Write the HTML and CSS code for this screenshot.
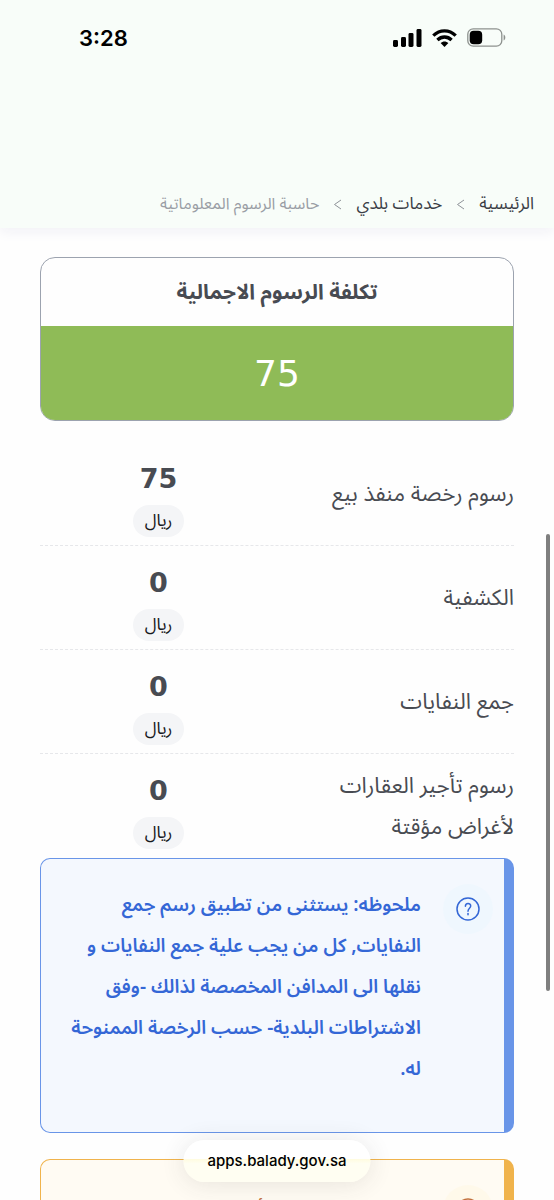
FILE: index.html
```html
<!DOCTYPE html>
<html lang="ar" dir="rtl">
  <head>
    <meta charset="utf-8" />
    <meta name="viewport" content="width=device-width, initial-scale=1" />
    <title>حاسبة الرسوم المعلوماتية</title>
    <link rel="stylesheet" href="styles.css">
  </head>

  <body>
    <header class="top">
      <div class="status-bar" dir="ltr">
        <span class="time">3:28</span>
        <div class="status-icons">
          <svg width="29" height="18" viewBox="0 0 29 18">
            <rect x="0" y="11" width="5" height="7" rx="1.4" />
            <rect x="8" y="8" width="5" height="10" rx="1.4" />
            <rect x="15.500" y="4" width="5" height="14" rx="1.4" />
            <rect x="23.500" y="0" width="5" height="18" rx="1.4" />
          </svg>
          <svg width="25" height="18" viewBox="0 0 25 18">
            <g fill="none" stroke="#000" stroke-width="3.300">
              <path d="M1.300 6.600C7.800 .2 17.200 .2 23.700 6.600" />
              <path d="M5.400 11C9.600 7 15.400 7 19.600 11" />
            </g>
            <path d="M8.600 14.100C10.900 12 14.100 12 16.400 14.100L12.500 18Z" />
          </svg>
          <svg width="39" height="19" viewBox="0 0 39 19">
            <rect x=".8" y=".8" width="34" height="17.400" rx="5.500" fill="none" stroke="#8d918e" stroke-width="1.300" />
            <rect x="2.700" y="2.800" width="12.500" height="13.400" rx="4" />
            <path d="M36.600 6.500C38.900 7.500 38.900 11.500 36.600 12.500Z" fill="#8d918e" />
          </svg>
        </div>
      </div>
      <nav class="breadcrumb">
        <a href="#">الرئيسية</a>
        <svg class="sep" width="9" height="11" viewBox="0 0 9 11"><path d="M8 1L1.500 5.500L8 10" /></svg>
        <a href="#">خدمات بلدي</a>
        <svg class="sep" width="9" height="11" viewBox="0 0 9 11"><path d="M8 1L1.500 5.500L8 10" /></svg>
        <span class="current">حاسبة الرسوم المعلوماتية</span>
      </nav>
    </header>

    <main>
      <section class="total">
        <h1>تكلفة الرسوم الاجمالية</h1>
        <div class="total-value">75</div>
      </section>

      <ul class="fees">
        <li>
          <span class="fee-name">رسوم رخصة منفذ بيع</span>
          <div class="fee-value"><b>75</b><span class="unit">ريال</span></div>
        </li>
        <li>
          <span class="fee-name">الكشفية</span>
          <div class="fee-value"><b>0</b><span class="unit">ريال</span></div>
        </li>
        <li>
          <span class="fee-name">جمع النفايات</span>
          <div class="fee-value"><b>0</b><span class="unit">ريال</span></div>
        </li>
        <li>
          <span class="fee-name">رسوم تأجير العقارات<br>لأغراض مؤقتة</span>
          <div class="fee-value"><b>0</b><span class="unit">ريال</span></div>
        </li>
      </ul>

      <section class="note note-info">
        <div class="note-icon">
          <svg width="24" height="24" viewBox="0 0 24 24">
            <circle cx="12" cy="12" r="11" />
            <path d="M9.400 9.300C9.400 5.600 14.700 5.700 14.700 9.100C14.700 11.300 12 11.400 12 14.200" />
            <path d="M12 16.600V17.800" />
          </svg>
        </div>
        <p>
          ملحوظه: يستثنى من تطبيق رسم جمع<br>
          النفايات, كل من يجب علية جمع النفايات و<br>
          نقلها الى المدافن المخصصة لذالك -وفق<br>
          الاشتراطات البلدية- حسب الرخصة الممنوحة<br>
          له.
        </p>
      </section>

      <section class="note note-warning">
        <div class="note-icon">
          <svg width="24" height="24" viewBox="0 0 24 24">
            <circle cx="12" cy="12" r="11" />
            <path d="M9.400 9.300C9.400 5.600 14.700 5.700 14.700 9.100C14.700 11.300 12 11.400 12 14.200" />
            <path d="M12 16.600V17.800" />
          </svg>
        </div>
        <p>ملحوظه: يتم زيادة الأجور من المحل</p>
      </section>
    </main>

    <div class="scroll-thumb"></div>
    <a class="address" href="#" dir="ltr">apps.balady.gov.sa</a>
  </body>
</html>
```

FILE: styles.css
```css
* {
  box-sizing: border-box;
}

body {
  margin: 0;
  height: 100vh;
  overflow: hidden;
  position: relative;
  background-color: #fefefe;
  color: #484b52;
  font-family: "Noto Sans Arabic", "Noto Sans", "DejaVu Sans", sans-serif;
}

/* header */
.top {
  background-color: #f8fdf9;
  box-shadow: 0 4px 12px #f1f1f6;
}

.status-bar {
  display: flex;
  justify-content: space-between;
  align-items: center;
  height: 75px;
  padding: 0 48px 0 79px;
}

.time {
  color: #000;
  font: 600 22px/28px Inter, sans-serif;
}

.status-icons {
  display: flex;
  align-items: center;
  gap: 10px;
}

.breadcrumb {
  display: flex;
  align-items: center;
  gap: 14px;
  margin-top: 105px;
  height: 48px;
  padding: 0 20px;
  font-size: 17px;
  white-space: nowrap;
}

.breadcrumb a {
  color: #3b3e46;
  text-decoration: none;
}

.breadcrumb .current {
  color: #9a9ea5;
  font-size: 16px;
}

.sep {
  fill: none;
  stroke: #8e9298;
}

main {
  padding: 29px 40px 0;
}

/* total box */
.total {
  border: 1px solid #9ca3af;
  border-radius: 15px;
  overflow: hidden;
  text-align: center;
}

.total h1 {
  margin: 0;
  font-size: 21px;
  line-height: 68px;
}

.total-value {
  padding-top: 2px;
  background-color: #8fbb57;
  color: #fff;
  font: 36px/92px "DejaVu Sans", sans-serif;
}

/* fees list */
.fees {
  list-style: none;
  margin: 21px 0 0;
  padding: 0;
}

.fees li {
  display: flex;
  align-items: center;
  height: 104px;
  border-bottom: 1px dashed #e6e7ea;
}

.fees li:last-child {
  border-bottom: 0;
}

.fee-name {
  flex: 1;
  padding-top: 2px;
  font-size: 22px;
  line-height: 41px;
  white-space: nowrap;
}

.fee-value {
  display: flex;
  flex-direction: column;
  align-items: center;
  gap: 8px;
  width: 50%;
  padding-top: 10px;
}

.fee-value b {
  font: 700 27px/36px "DejaVu Sans", sans-serif;
}

.unit {
  padding: 0 12px;
  border-radius: 16px;
  background-color: #f4f5f7;
  color: #17181c;
  font-size: 17px;
  line-height: 32px;
}

/* notes */
.note {
  display: flex;
  gap: 22px;
  min-height: 275px;
  padding: 25px 11px 25px 24px;
  margin-bottom: 26px;
  border: 1px solid;
  border-right-width: 10px;
  border-radius: 10px;
}

.note p {
  margin: 0;
  padding-top: 1px;
  font-size: 19px;
  font-weight: 600;
  line-height: 41px;
  white-space: nowrap;
}

.note-icon {
  display: flex;
  align-items: center;
  justify-content: center;
  width: 50px;
  height: 50px;
  border-radius: 50%;
}

.note-icon svg {
  fill: none;
  stroke: currentColor;
  stroke-width: 1.500;
  stroke-linecap: round;
}

.note-info {
  background-color: #f4f8fe;
  border-color: #6995e8;
  color: #3467d6;
}

.note-info .note-icon {
  background-color: #eff7fe;
}

.note-warning {
  background-color: #fffbf3;
  border-color: #f0b34c;
  color: #c2703d;
}

.note-warning p {
  padding-top: 4px;
}

.note-warning .note-icon {
  background-color: #fff9ea;
}

/* overlays */
.scroll-thumb {
  position: absolute;
  top: 534px;
  right: 4px;
  width: 4px;
  height: 457px;
  border-radius: 2px;
  background-color: #7f7f7f;
}

.address {
  position: absolute;
  bottom: 18px;
  left: 50%;
  transform: translateX(-50%);
  padding: 0 24px;
  border-radius: 21px;
  background: linear-gradient(#fff 44%, #fffce0 46%, #fffef2 56%);
  box-shadow: 0 2px 24px rgba(60, 60, 60, .12);
  color: #000;
  font: 500 15px/42px Inter, sans-serif;
  text-decoration: none;
}
```
